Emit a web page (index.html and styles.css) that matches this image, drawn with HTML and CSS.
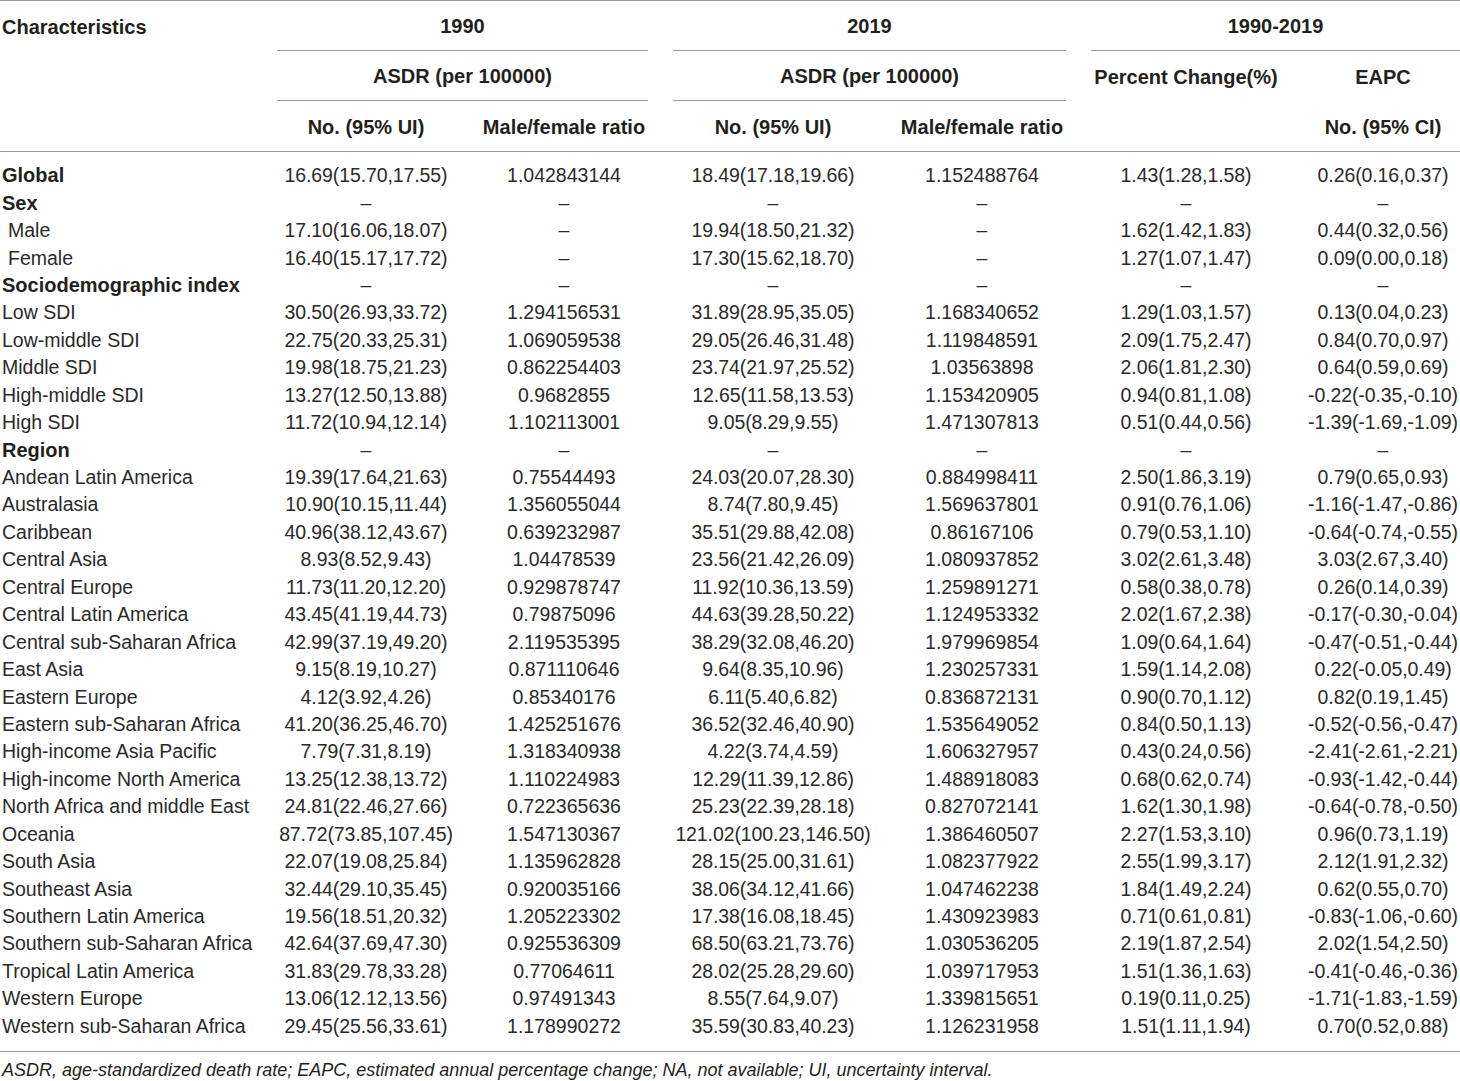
FILE: index.html
```html
<!DOCTYPE html>
<html lang="en">
<head>
<meta charset="utf-8">
<title>ASDR table</title>
<link rel="stylesheet" href="styles.css">
</head>
<body>
<div class="tbl">
  <div class="head">
    <div class="h c1 left r1">Characteristics</div>
    <div class="h g23 r1 ul">1990</div>
    <div class="h g45 r1 ul">2019</div>
    <div class="h g67 r1 ul">1990-2019</div>

    <div class="h g23 r2 ul">ASDR (per 100000)</div>
    <div class="h g45 r2 ul">ASDR (per 100000)</div>
    <div class="h c6 r2">Percent Change(%)</div>
    <div class="h c7 r2">EAPC</div>

    <div class="h c2 r3">No. (95% UI)</div>
    <div class="h c3 r3">Male/female ratio</div>
    <div class="h c4 r3">No. (95% UI)</div>
    <div class="h c5 r3">Male/female ratio</div>
    <div class="h c7 r3">No. (95% CI)</div>
  </div>
  <div class="body">
    <div class="row"><span class="lab b">Global</span><span class="n">16.69(15.70,17.55)</span><span>1.042843144</span><span class="n">18.49(17.18,19.66)</span><span>1.152488764</span><span class="n">1.43(1.28,1.58)</span><span class="n">0.26(0.16,0.37)</span></div>
    <div class="row"><span class="lab b">Sex</span><span>–</span><span>–</span><span>–</span><span>–</span><span>–</span><span>–</span></div>
    <div class="row"><span class="lab ind">Male</span><span class="n">17.10(16.06,18.07)</span><span>–</span><span class="n">19.94(18.50,21.32)</span><span>–</span><span class="n">1.62(1.42,1.83)</span><span class="n">0.44(0.32,0.56)</span></div>
    <div class="row"><span class="lab ind">Female</span><span class="n">16.40(15.17,17.72)</span><span>–</span><span class="n">17.30(15.62,18.70)</span><span>–</span><span class="n">1.27(1.07,1.47)</span><span class="n">0.09(0.00,0.18)</span></div>
    <div class="row"><span class="lab b">Sociodemographic index</span><span>–</span><span>–</span><span>–</span><span>–</span><span>–</span><span>–</span></div>
    <div class="row"><span class="lab">Low SDI</span><span class="n">30.50(26.93,33.72)</span><span>1.294156531</span><span class="n">31.89(28.95,35.05)</span><span>1.168340652</span><span class="n">1.29(1.03,1.57)</span><span class="n">0.13(0.04,0.23)</span></div>
    <div class="row"><span class="lab">Low-middle SDI</span><span class="n">22.75(20.33,25.31)</span><span>1.069059538</span><span class="n">29.05(26.46,31.48)</span><span>1.119848591</span><span class="n">2.09(1.75,2.47)</span><span class="n">0.84(0.70,0.97)</span></div>
    <div class="row"><span class="lab">Middle SDI</span><span class="n">19.98(18.75,21.23)</span><span>0.862254403</span><span class="n">23.74(21.97,25.52)</span><span>1.03563898</span><span class="n">2.06(1.81,2.30)</span><span class="n">0.64(0.59,0.69)</span></div>
    <div class="row"><span class="lab">High-middle SDI</span><span class="n">13.27(12.50,13.88)</span><span>0.9682855</span><span class="n">12.65(11.58,13.53)</span><span>1.153420905</span><span class="n">0.94(0.81,1.08)</span><span class="n">-0.22(-0.35,-0.10)</span></div>
    <div class="row"><span class="lab">High SDI</span><span class="n">11.72(10.94,12.14)</span><span>1.102113001</span><span class="n">9.05(8.29,9.55)</span><span>1.471307813</span><span class="n">0.51(0.44,0.56)</span><span class="n">-1.39(-1.69,-1.09)</span></div>
    <div class="row"><span class="lab b">Region</span><span>–</span><span>–</span><span>–</span><span>–</span><span>–</span><span>–</span></div>
    <div class="row"><span class="lab">Andean Latin America</span><span class="n">19.39(17.64,21.63)</span><span>0.75544493</span><span class="n">24.03(20.07,28.30)</span><span>0.884998411</span><span class="n">2.50(1.86,3.19)</span><span class="n">0.79(0.65,0.93)</span></div>
    <div class="row"><span class="lab">Australasia</span><span class="n">10.90(10.15,11.44)</span><span>1.356055044</span><span class="n">8.74(7.80,9.45)</span><span>1.569637801</span><span class="n">0.91(0.76,1.06)</span><span class="n">-1.16(-1.47,-0.86)</span></div>
    <div class="row"><span class="lab">Caribbean</span><span class="n">40.96(38.12,43.67)</span><span>0.639232987</span><span class="n">35.51(29.88,42.08)</span><span>0.86167106</span><span class="n">0.79(0.53,1.10)</span><span class="n">-0.64(-0.74,-0.55)</span></div>
    <div class="row"><span class="lab">Central Asia</span><span class="n">8.93(8.52,9.43)</span><span>1.04478539</span><span class="n">23.56(21.42,26.09)</span><span>1.080937852</span><span class="n">3.02(2.61,3.48)</span><span class="n">3.03(2.67,3.40)</span></div>
    <div class="row"><span class="lab">Central Europe</span><span class="n">11.73(11.20,12.20)</span><span>0.929878747</span><span class="n">11.92(10.36,13.59)</span><span>1.259891271</span><span class="n">0.58(0.38,0.78)</span><span class="n">0.26(0.14,0.39)</span></div>
    <div class="row"><span class="lab">Central Latin America</span><span class="n">43.45(41.19,44.73)</span><span>0.79875096</span><span class="n">44.63(39.28,50.22)</span><span>1.124953332</span><span class="n">2.02(1.67,2.38)</span><span class="n">-0.17(-0.30,-0.04)</span></div>
    <div class="row"><span class="lab">Central sub-Saharan Africa</span><span class="n">42.99(37.19,49.20)</span><span>2.119535395</span><span class="n">38.29(32.08,46.20)</span><span>1.979969854</span><span class="n">1.09(0.64,1.64)</span><span class="n">-0.47(-0.51,-0.44)</span></div>
    <div class="row"><span class="lab">East Asia</span><span class="n">9.15(8.19,10.27)</span><span>0.871110646</span><span class="n">9.64(8.35,10.96)</span><span>1.230257331</span><span class="n">1.59(1.14,2.08)</span><span class="n">0.22(-0.05,0.49)</span></div>
    <div class="row"><span class="lab">Eastern Europe</span><span class="n">4.12(3.92,4.26)</span><span>0.85340176</span><span class="n">6.11(5.40,6.82)</span><span>0.836872131</span><span class="n">0.90(0.70,1.12)</span><span class="n">0.82(0.19,1.45)</span></div>
    <div class="row"><span class="lab">Eastern sub-Saharan Africa</span><span class="n">41.20(36.25,46.70)</span><span>1.425251676</span><span class="n">36.52(32.46,40.90)</span><span>1.535649052</span><span class="n">0.84(0.50,1.13)</span><span class="n">-0.52(-0.56,-0.47)</span></div>
    <div class="row"><span class="lab">High-income Asia Pacific</span><span class="n">7.79(7.31,8.19)</span><span>1.318340938</span><span class="n">4.22(3.74,4.59)</span><span>1.606327957</span><span class="n">0.43(0.24,0.56)</span><span class="n">-2.41(-2.61,-2.21)</span></div>
    <div class="row"><span class="lab">High-income North America</span><span class="n">13.25(12.38,13.72)</span><span>1.110224983</span><span class="n">12.29(11.39,12.86)</span><span>1.488918083</span><span class="n">0.68(0.62,0.74)</span><span class="n">-0.93(-1.42,-0.44)</span></div>
    <div class="row"><span class="lab">North Africa and middle East</span><span class="n">24.81(22.46,27.66)</span><span>0.722365636</span><span class="n">25.23(22.39,28.18)</span><span>0.827072141</span><span class="n">1.62(1.30,1.98)</span><span class="n">-0.64(-0.78,-0.50)</span></div>
    <div class="row"><span class="lab">Oceania</span><span class="n">87.72(73.85,107.45)</span><span>1.547130367</span><span class="n">121.02(100.23,146.50)</span><span>1.386460507</span><span class="n">2.27(1.53,3.10)</span><span class="n">0.96(0.73,1.19)</span></div>
    <div class="row"><span class="lab">South Asia</span><span class="n">22.07(19.08,25.84)</span><span>1.135962828</span><span class="n">28.15(25.00,31.61)</span><span>1.082377922</span><span class="n">2.55(1.99,3.17)</span><span class="n">2.12(1.91,2.32)</span></div>
    <div class="row"><span class="lab">Southeast Asia</span><span class="n">32.44(29.10,35.45)</span><span>0.920035166</span><span class="n">38.06(34.12,41.66)</span><span>1.047462238</span><span class="n">1.84(1.49,2.24)</span><span class="n">0.62(0.55,0.70)</span></div>
    <div class="row"><span class="lab">Southern Latin America</span><span class="n">19.56(18.51,20.32)</span><span>1.205223302</span><span class="n">17.38(16.08,18.45)</span><span>1.430923983</span><span class="n">0.71(0.61,0.81)</span><span class="n">-0.83(-1.06,-0.60)</span></div>
    <div class="row"><span class="lab">Southern sub-Saharan Africa</span><span class="n">42.64(37.69,47.30)</span><span>0.925536309</span><span class="n">68.50(63.21,73.76)</span><span>1.030536205</span><span class="n">2.19(1.87,2.54)</span><span class="n">2.02(1.54,2.50)</span></div>
    <div class="row"><span class="lab">Tropical Latin America</span><span class="n">31.83(29.78,33.28)</span><span>0.77064611</span><span class="n">28.02(25.28,29.60)</span><span>1.039717953</span><span class="n">1.51(1.36,1.63)</span><span class="n">-0.41(-0.46,-0.36)</span></div>
    <div class="row"><span class="lab">Western Europe</span><span class="n">13.06(12.12,13.56)</span><span>0.97491343</span><span class="n">8.55(7.64,9.07)</span><span>1.339815651</span><span class="n">0.19(0.11,0.25)</span><span class="n">-1.71(-1.83,-1.59)</span></div>
    <div class="row"><span class="lab">Western sub-Saharan Africa</span><span class="n">29.45(25.56,33.61)</span><span>1.178990272</span><span class="n">35.59(30.83,40.23)</span><span>1.126231958</span><span class="n">1.51(1.11,1.94)</span><span class="n">0.70(0.52,0.88)</span></div>
  </div>
  <p class="note">ASDR, age-standardized death rate; EAPC, estimated annual percentage change; NA, not available; UI, uncertainty interval.</p>
</div>
</body>
</html>
```
FILE: styles.css
```css
html, body {
  margin: 0;
  padding: 0;
  background: #ffffff;
}
body {
  font-family: "Liberation Sans", Arial, sans-serif;
  color: #231f20;
}
.tbl {
  width: 1460px;
}
.head {
  display: grid;
  grid-template-columns: 252px 178px 168px 200px 168px 190px 154px;
  grid-template-rows: 50px 50px 50px;
  column-gap: 25px;
  border-top: 1px solid #9a9a9a;
  border-bottom: 1px solid #9a9a9a;
}
.h {
  display: flex;
  align-items: center;
  justify-content: center;
  font-weight: bold;
  font-size: 20px;
  box-sizing: border-box;
  padding-top: 2px;
}
.h.left {
  justify-content: flex-start;
  padding-left: 2px;
}
.ul {
  border-bottom: 1px solid #9a9a9a;
}
.r1 { grid-row: 1; }
.r2 { grid-row: 2; }
.r3 { grid-row: 3; }
.c1 { grid-column: 1; }
.c2 { grid-column: 2; }
.c3 { grid-column: 3; }
.c4 { grid-column: 4; }
.c5 { grid-column: 5; }
.c6 { grid-column: 6; }
.c7 { grid-column: 7; }
.g23 { grid-column: 2 / 4; }
.g45 { grid-column: 4 / 6; }
.g67 { grid-column: 6 / 8; }

.body {
  padding: 10px 0 11px;
  border-bottom: 1px solid #9a9a9a;
}
.row {
  display: grid;
  grid-template-columns: 252px 178px 168px 200px 168px 190px 154px;
  column-gap: 25px;
  height: 27.45px;
  align-items: center;
  font-size: 19.5px;
  color: #2a2a2a;
}
.row span {
  text-align: center;
  white-space: nowrap;
}
.row .n {
  letter-spacing: -0.1px;
}
.row .lab {
  text-align: left;
  padding-left: 2px;
}
.row .ind {
  padding-left: 8px;
}
.row .b {
  font-weight: bold;
  font-size: 20px;
  color: #231f20;
}
.note {
  margin: 0;
  padding: 8px 0 0 2px;
  font-style: italic;
  font-size: 18px;
  line-height: 20px;
}
```
